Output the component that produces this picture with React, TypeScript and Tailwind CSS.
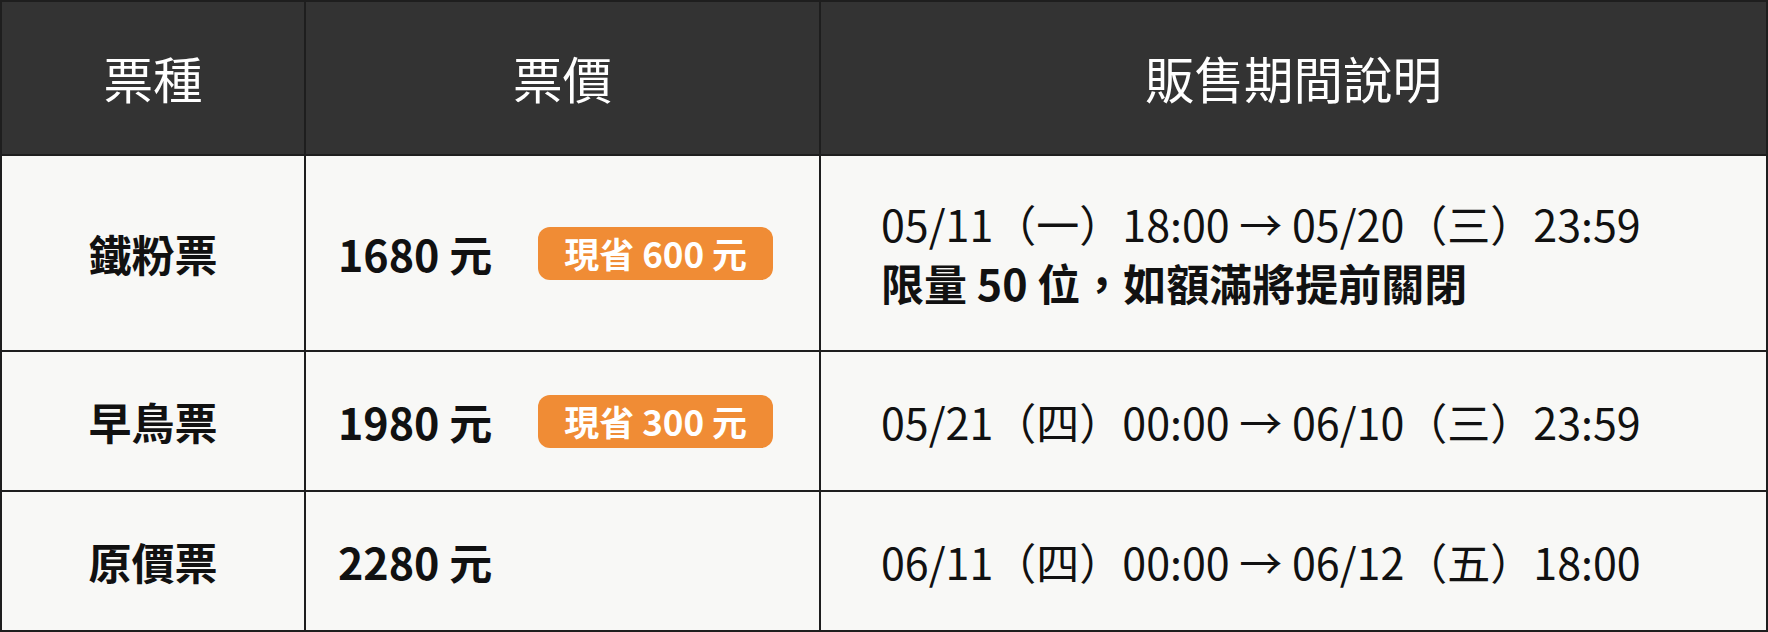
import React from "react"

type Row = {
  name: string
  price: string
  save?: string
  dates: string
  note?: string
  h: string
}

const rows: Row[] = [
  { name: "鐵粉票", price: "1680 元", save: "現省 600 元", dates: "05/11（一）18:00 → 05/20（三）23:59", note: "限量 50 位，如額滿將提前關閉", h: "h-[196px]" },
  { name: "早鳥票", price: "1980 元", save: "現省 300 元", dates: "05/21（四）00:00 → 06/10（三）23:59", h: "h-[140px]" },
  { name: "原價票", price: "2280 元", dates: "06/11（四）00:00 → 06/12（五）18:00", h: "h-[140px]" },
]

export default function App() {
  return (
    <div className="w-[1768px] bg-[#f8f8f6] font-['Noto_Sans_CJK_TC','Noto_Sans',sans-serif]">
      <div className="grid grid-cols-[304px_515px_947px] border-l-2 border-t-2 border-[#1e1e1e]">
        {["票種", "票價", "販售期間說明"].map((t) => (
          <div key={t} className="h-[154px] flex items-center justify-center bg-[#333333] border-r-2 border-b-2 border-[#1e1e1e] text-white text-[49.5px] font-normal">
            {t}
          </div>
        ))}
        {rows.map((r) => (
          <React.Fragment key={r.name}>
            <div className={`${r.h} flex items-center justify-center border-r-2 border-b-2 border-[#1e1e1e] text-[43px] font-bold text-[#111]`}>
              {r.name}
            </div>
            <div className={`${r.h} flex items-center pl-[32px] gap-[46px] border-r-2 border-b-2 border-[#1e1e1e]`}>
              <span className="text-[43px] font-bold text-[#111]">{r.price}</span>
              {r.save && (
                <span className="h-[53px] flex items-center px-[26px] rounded-[12px] bg-[#f08c35] text-white text-[35px] font-bold">
                  {r.save}
                </span>
              )}
            </div>
            <div className={`${r.h} flex flex-col justify-center pl-[60px] border-r-2 border-b-2 border-[#1e1e1e] text-[#111] text-[43px] leading-[59px]`}>
              <div>{r.dates}</div>
              {r.note && <div className="font-bold">{r.note}</div>}
            </div>
          </React.Fragment>
        ))}
      </div>
    </div>
  )
}
